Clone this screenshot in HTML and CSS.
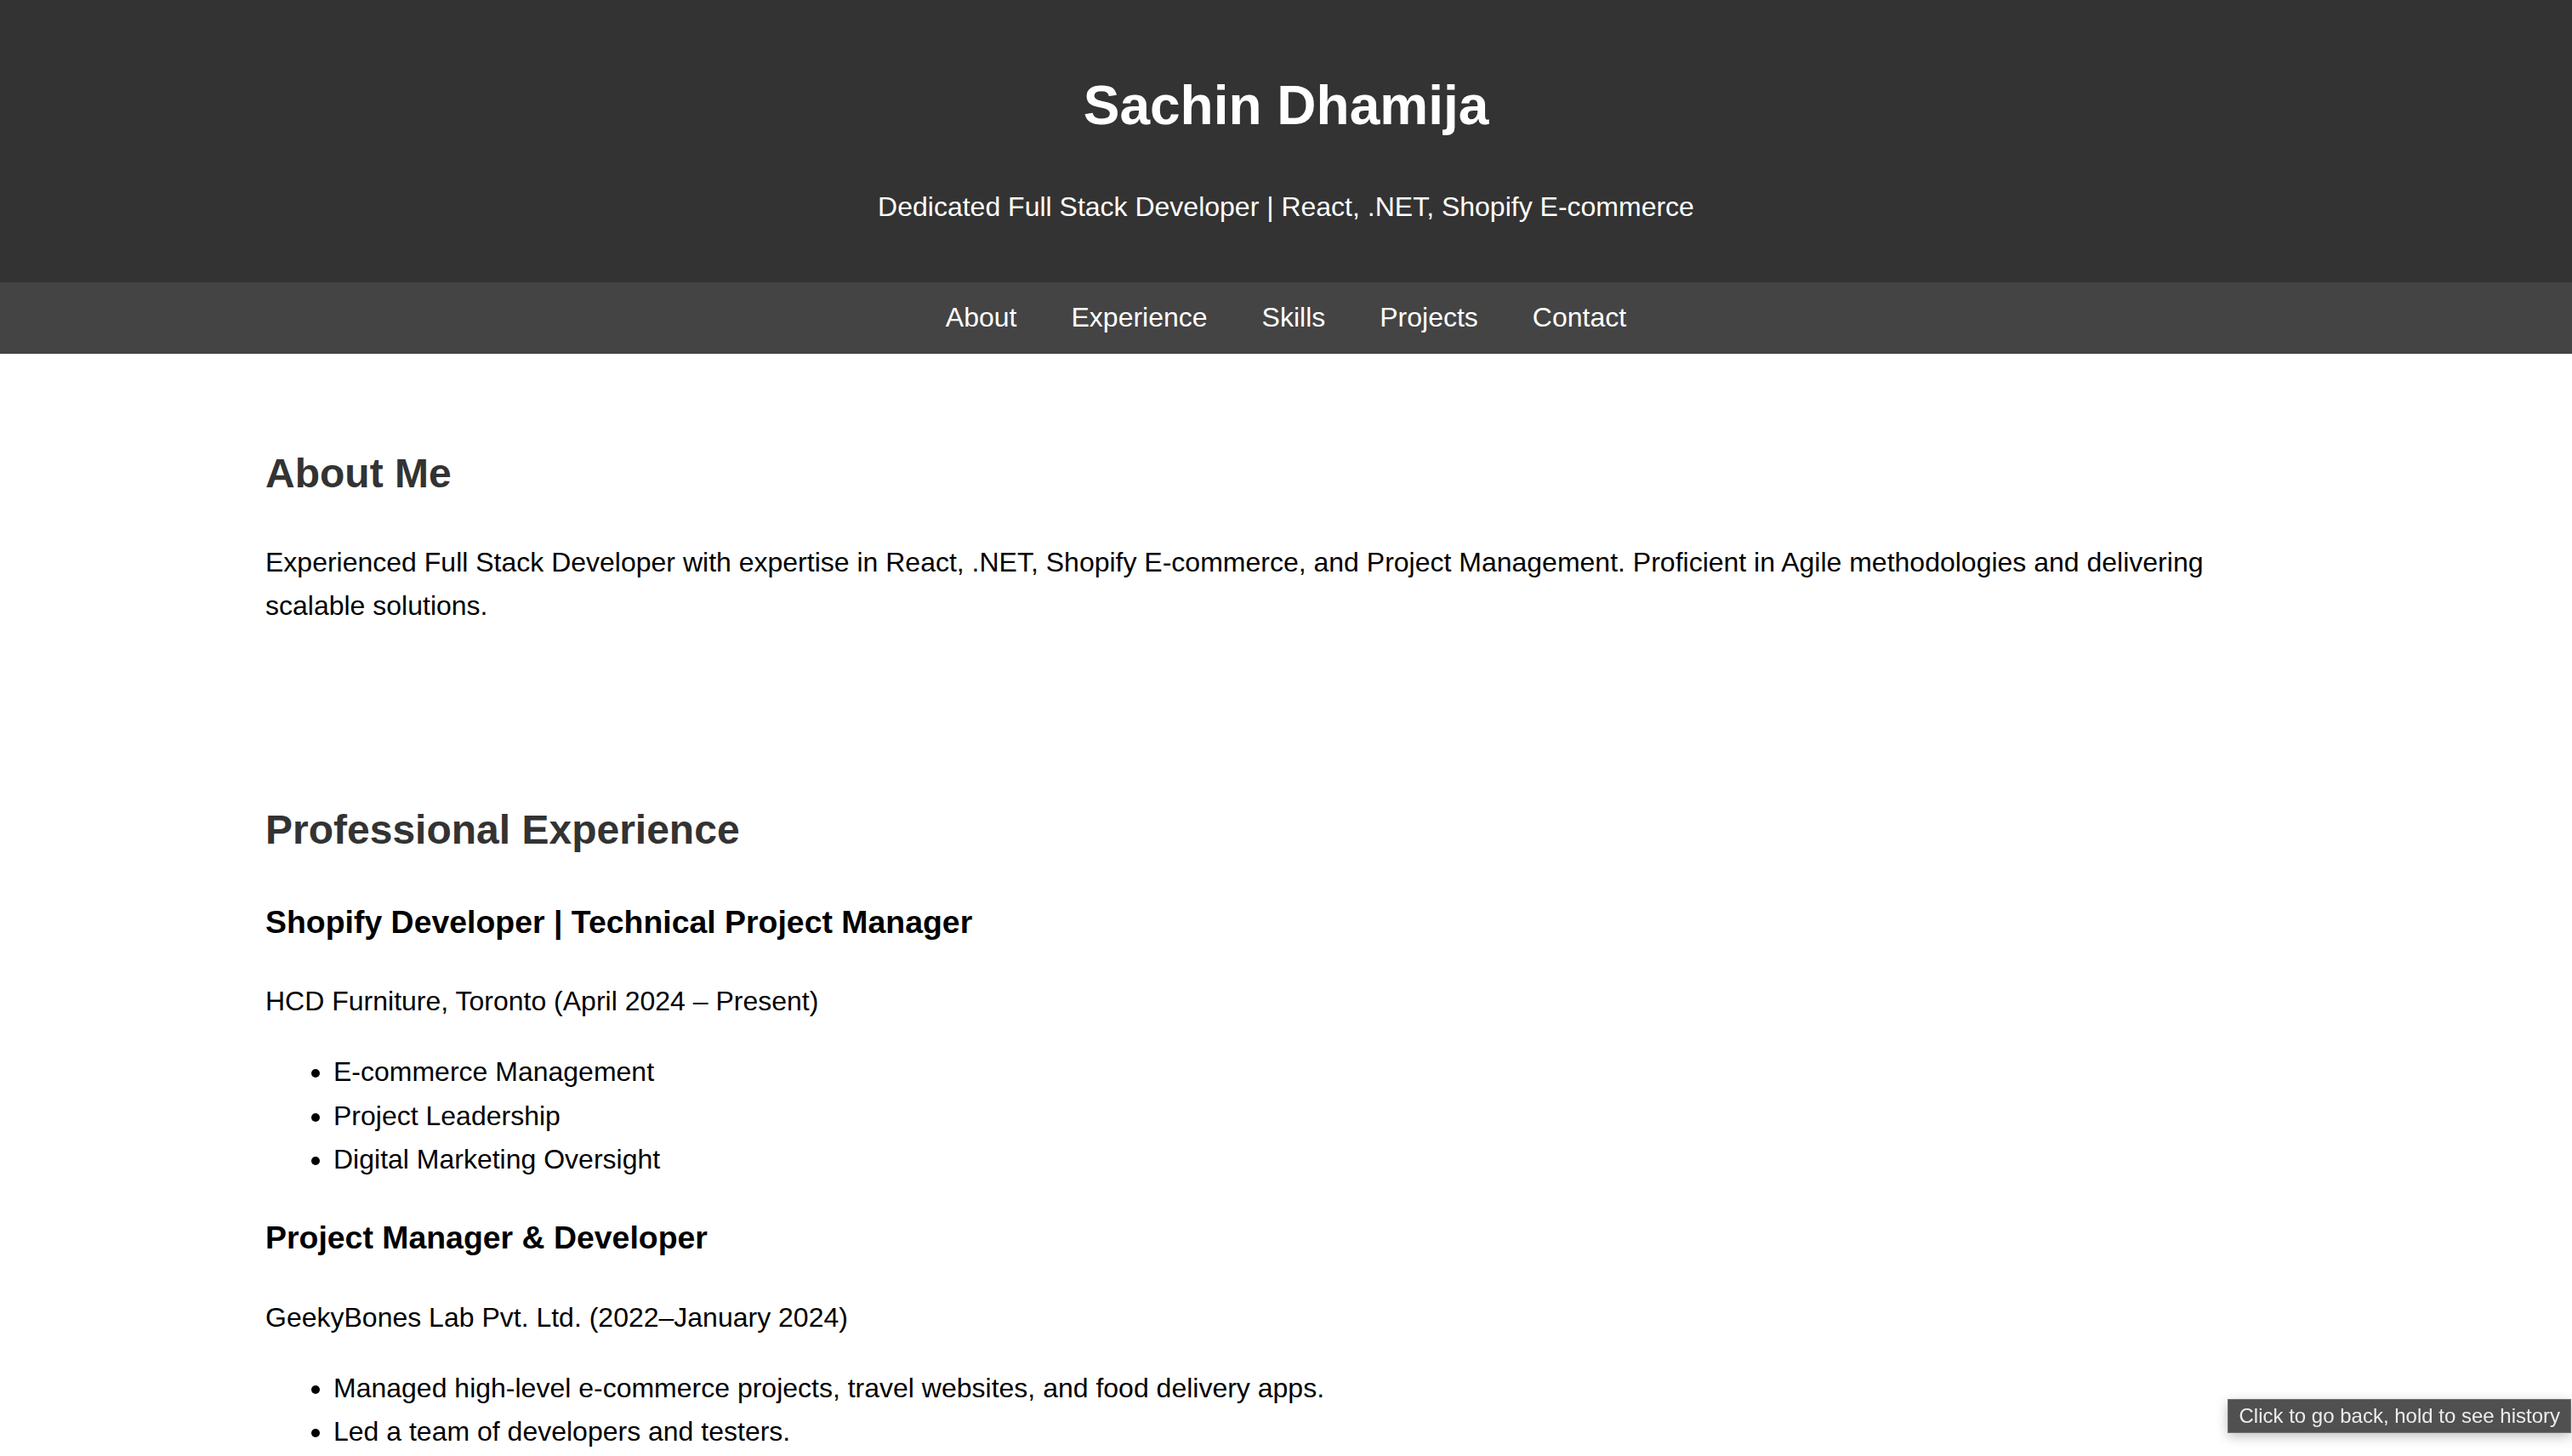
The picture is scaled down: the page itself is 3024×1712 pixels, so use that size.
FILE: index.html
```html
<!DOCTYPE html>
<html lang="en">
<head>
<meta charset="utf-8">
<title>Sachin Dhamija</title>
<link rel="stylesheet" href="styles.css">
</head>
<body>
<header class="site-header">
  <h1 class="site-title">Sachin Dhamija</h1>
  <p class="site-tagline">Dedicated Full Stack Developer | React, .NET, Shopify E-commerce</p>
</header>
<nav class="site-nav">
  <a href="#about">About</a>
  <a href="#experience">Experience</a>
  <a href="#skills">Skills</a>
  <a href="#projects">Projects</a>
  <a href="#contact">Contact</a>
</nav>
<main>
  <section class="section" id="about">
    <h2 class="section-title">About Me</h2>
    <p>Experienced Full Stack Developer with expertise in React, .NET, Shopify E-commerce, and Project Management. Proficient in Agile methodologies and delivering scalable solutions.</p>
  </section>
  <section class="section" id="experience">
    <h2 class="section-title">Professional Experience</h2>
    <h3 class="job-title">Shopify Developer | Technical Project Manager</h3>
    <p>HCD Furniture, Toronto (April 2024 – Present)</p>
    <ul class="job-list">
      <li>E-commerce Management</li>
      <li>Project Leadership</li>
      <li>Digital Marketing Oversight</li>
    </ul>
    <h3 class="job-title">Project Manager &amp; Developer</h3>
    <p>GeekyBones Lab Pvt. Ltd. (2022–January 2024)</p>
    <ul class="job-list">
      <li>Managed high-level e-commerce projects, travel websites, and food delivery apps.</li>
      <li>Led a team of developers and testers.</li>
    </ul>
  </section>
</main>
<div class="back-tooltip">Click to go back, hold to see history</div>
</body>
</html>
```
FILE: styles.css
```css
html, body {
  margin: 0;
  padding: 0;
}
body {
  font-family: "Liberation Sans", Arial, Helvetica, sans-serif;
  font-size: 32px;
  line-height: 1.6;
  color: #000;
  background: #fff;
}
.site-header {
  background: #333;
  color: #fff;
  text-align: center;
  padding: 30px 0 31px;
}
.site-title {
  font-size: 64px;
  font-weight: bold;
  margin: 42.88px 0;
}
.site-tagline {
  margin: 32px 0;
}
.site-nav {
  background: #444;
  padding: 16px 0;
  display: flex;
  justify-content: center;
  gap: 64px;
}
.site-nav a {
  color: #fff;
  text-decoration: none;
}
.section {
  max-width: 2400px;
  margin: 0 auto;
  padding: 64px;
}
.section-title {
  font-size: 48px;
  color: #333;
  margin: 39.84px 0;
}
.job-title {
  font-size: 37.44px;
  margin: 37.44px 0;
}
.section p {
  margin: 32px 0;
}
.job-list {
  margin: 32px 0;
  padding-left: 80px;
}
.back-tooltip {
  position: fixed;
  right: 1px;
  top: 1645px;
  background: #505050;
  color: #ececec;
  border: 1px solid #6e6e6e;
  font-family: "Liberation Sans", Arial, sans-serif;
  font-size: 24px;
  line-height: 38px;
  padding: 0 12px;
  box-shadow: 0 4px 14px rgba(0, 0, 0, 0.25);
  white-space: nowrap;
}
```
